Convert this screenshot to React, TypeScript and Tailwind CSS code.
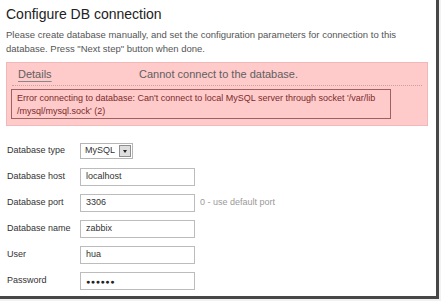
import React from "react";

const font = "font-['Liberation_Sans',Arial,sans-serif]";

function TextField({ value, password = false }: { value: string; password?: boolean }) {
  return (
    <div className="flex h-[18px] w-[115px] items-center border border-[#bcbcbc] bg-white pl-[5px] text-[9px] text-[#333]">
      {password ? <span className="text-[7px] leading-none tracking-[0.6px] text-[#222]">●●●●●●</span> : value}
    </div>
  );
}

function SelectField() {
  return (
    <div className="flex h-[16px] w-[53px] items-center justify-between border border-[#b5b5b5] bg-white pl-[4px] pr-[1px] text-[9px] text-[#333]">
      <span>MySQL</span>
      <div className="flex h-[12px] w-[12px] items-center justify-center border border-[#8f8f8f] bg-[#dedede]">
        <div className="h-0 w-0 border-l-[2.5px] border-r-[2.5px] border-t-[3px] border-l-transparent border-r-transparent border-t-[#222]" />
      </div>
    </div>
  );
}

function Row({ label, children }: { label: string; children: React.ReactNode }) {
  return (
    <div className="flex h-[26px] items-center">
      <div className="w-[74px] pl-[1px] text-[9px] text-[#333]">{label}</div>
      {children}
    </div>
  );
}

export default function App() {
  return (
    <div className={`h-[301px] w-[441px] bg-[#f2f2f2] ${font}`}>
      <div className="h-[299px] w-[439px] border-b-[3px] border-r-[3px] border-[#474747] bg-white px-[6px] pt-[4px]">
        <h1 className="text-[14px] leading-[20px] text-[#222]">Configure DB connection</h1>

        <p className="mt-[4px] text-[9.5px] leading-[14px] text-[#555]">
          Please create database manually, and set the configuration parameters for connection to this database. Press "Next step" button when done.
        </p>

        {/* Error message box */}
        <div className="mt-[6px] w-[422px] border border-[#f0b8b8] bg-[#ffcaca] px-[4px] pb-[6px]">
          <div className="mx-[1px] flex h-[23px] items-center border-b border-dotted border-[#c9a0a0] pt-[1px] text-[11px] text-[#606060]">
            <span className="ml-[6px] w-[121px] underline decoration-[#888] underline-offset-[3px]">Details</span>
            <span>Cannot connect to the database.</span>
          </div>
          <div className="mt-[3px] h-[30px] w-[380px] border border-[#a06060] px-[5px] pt-[2px] text-[9px] leading-[13px] text-[#7a2a2a]">
            Error connecting to database: Can't connect to local MySQL server through socket '/var/lib /mysql/mysql.sock' (2)
          </div>
        </div>

        <div className="mt-[12px] flex flex-col">
          <Row label="Database type">
            <SelectField />
          </Row>
          <Row label="Database host">
            <TextField value="localhost" />
          </Row>
          <Row label="Database port">
            <TextField value="3306" />
            <span className="ml-[5px] text-[9px] text-[#9a9a9a]">0 - use default port</span>
          </Row>
          <Row label="Database name">
            <TextField value="zabbix" />
          </Row>
          <Row label="User">
            <TextField value="hua" />
          </Row>
          <Row label="Password">
            <TextField value="" password />
          </Row>
        </div>
      </div>
    </div>
  );
}
